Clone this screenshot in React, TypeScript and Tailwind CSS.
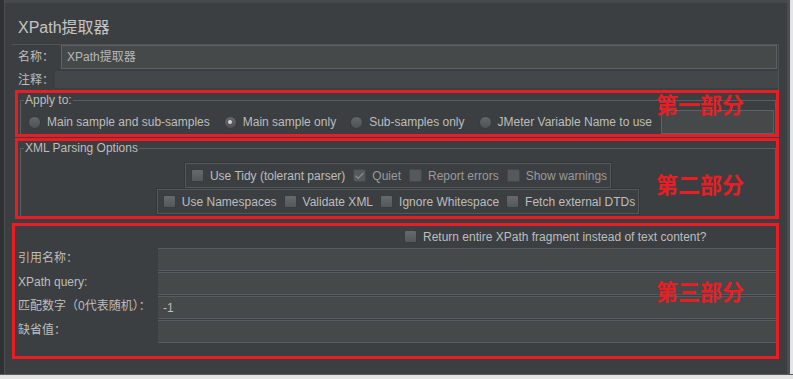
import { Check } from 'lucide-react'

const FONT = "font-['Liberation_Sans','Noto_Sans_CJK_SC',sans-serif]"

function Radio({ checked = false }: { checked?: boolean }) {
  return (
    <span className="flex h-[13px] w-[13px] shrink-0 items-center justify-center rounded-full border border-[#383a3c] bg-linear-to-b from-[#63676a] to-[#4e5254]">
      {checked && <span className="h-[4px] w-[4px] rounded-full bg-[#cfcfcf]" />}
    </span>
  )
}

function Box({ checked = false, dim = false }: { checked?: boolean; dim?: boolean }) {
  return (
    <span
      className={`flex h-[13px] w-[13px] shrink-0 items-center justify-center rounded-[2px] border ${
        dim ? 'border-[#45484a] bg-[#55595b]' : 'border-[#3a3d3f] bg-linear-to-b from-[#666a6d] to-[#54585b]'
      }`}
    >
      {checked && <Check className="h-[12px] w-[12px] text-[#8e9092]" strokeWidth={2.5} />}
    </span>
  )
}

function CheckItem({ label, checked, dim }: { label: string; checked?: boolean; dim?: boolean }) {
  return (
    <span className="flex items-center gap-[6px]">
      <Box checked={checked} dim={dim} />
      <span className={dim ? 'text-[#9a9a9a]' : 'text-[#bdbdbd]'}>{label}</span>
    </span>
  )
}

function RadioItem({ label, checked }: { label: string; checked?: boolean }) {
  return (
    <span className="flex items-center gap-[6px]">
      <Radio checked={checked} />
      <span className="text-[#bdbdbd]">{label}</span>
    </span>
  )
}

function Tag({ text, className }: { text: string; className: string }) {
  return (
    <span
      className={`absolute text-[22px] leading-[24px] font-bold text-[#ea1d25] font-['Noto_Sans_CJK_SC',sans-serif] ${className}`}
    >
      {text}
    </span>
  )
}

const fields = [
  { label: '引用名称：', value: '' },
  { label: 'XPath query:', value: '' },
  { label: '匹配数字（0代表随机）：', value: '-1' },
  { label: '缺省值：', value: '' },
]

export default function App() {
  return (
    <div className={`flex h-[379px] w-[793px] flex-col bg-[#e4e4e4] text-[12px] text-[#bdbdbd] ${FONT}`}>
      <div className="flex h-[375px] border-b border-[#5a5d5f]">
        {/* left edge */}
        <div className="w-[5px] border-r border-[#4d5052] bg-[#2f3133]" />

        <div className="flex flex-1 flex-col border-t-[3px] border-[#46494b] bg-[#3c3f41] pl-[7px] pr-[8px]">
          {/* title */}
          <div className="mt-[15px] ml-[6px] h-[20px] text-[16px] leading-[20px] text-[#c4c4c4]">XPath提取器</div>

          {/* name */}
          <div className="mt-[6px] flex h-[25px] items-center border-t border-r border-[#505355] pl-[6px]">
            <span className="w-[43px]">名称：</span>
            <div className="mr-[1px] flex h-[24px] flex-1 items-center border border-[#5f6264] bg-[#45494a] pl-[5px] text-[#b8b8b8]">
              XPath提取器
            </div>
          </div>

          {/* comment */}
          <div className="flex h-[21px] items-center border-r border-[#505355] pl-[6px]">
            <span className="w-[37px]">注释：</span>
            <div className="h-[17px] flex-1 bg-[#444749]" />
          </div>

          {/* part one */}
          <div className="relative ml-[3px] h-[47px] border-[3px] border-[#ea1d25]">
            <fieldset className="ml-[2px] h-[41px] border-x border-t border-[#5b5e60]">
              <legend className="ml-[3px] px-[1px] text-[12px] leading-[14px]">Apply to:</legend>
              <div className="mt-[3px] flex h-[24px] items-center gap-[14px] pl-[7px]">
                <RadioItem label="Main sample and sub-samples" />
                <RadioItem label="Main sample only" checked />
                <RadioItem label="Sub-samples only" />
                <RadioItem label="JMeter Variable Name to use" />
                <div className="-ml-[5px] mr-[1px] h-[24px] flex-1 border border-[#5f6264] bg-[#45494a]" />
              </div>
            </fieldset>
            <Tag text="第一部分" className="left-[638px] -top-[2px]" />
          </div>

          {/* part two */}
          <div className="relative mt-[1px] ml-[3px] h-[81px] border-[3px] border-[#ea1d25]">
            <fieldset className="ml-[2px] h-[75px] border-x border-t border-[#5b5e60]">
              <legend className="ml-[3px] px-[1px] text-[12px] leading-[14px]">XML Parsing Options</legend>
              <div className="mt-[8px] flex flex-col items-center">
                <div className="flex h-[25px] items-center gap-[8px] border border-[#55585a] pr-[3px] pl-[5px] shadow-[0_0_0_1px_#34373a]">
                  <CheckItem label="Use Tidy (tolerant parser)" />
                  <CheckItem label="Quiet" checked dim />
                  <CheckItem label="Report errors" dim />
                  <CheckItem label="Show warnings" dim />
                </div>
                <div className="mt-[1px] flex h-[25px] items-center gap-[7px] border border-[#55585a] pr-[3px] pl-[5px] shadow-[0_0_0_1px_#34373a]">
                  <CheckItem label="Use Namespaces" />
                  <CheckItem label="Validate XML" />
                  <CheckItem label="Ignore Whitespace" />
                  <CheckItem label="Fetch external DTDs" />
                </div>
              </div>
            </fieldset>
            <Tag text="第二部分" className="left-[638px] top-[30px]" />
          </div>

          {/* part three */}
          <div className="relative mt-[4px] h-[136px] border-[3px] border-[#ea1d25]">
            <div className="flex h-[21px] items-center pl-[389px]">
              <CheckItem label="Return entire XPath fragment instead of text content?" />
            </div>
            <div className="mt-[1px] flex flex-col gap-[1px]">
              {fields.map((f) => (
                <div key={f.label} className="flex h-[23px] items-center">
                  <span className="-mt-[4px] w-[143px] pl-[3px]">{f.label}</span>
                  <div className="flex h-[23px] flex-1 items-center border-y border-[#585b5d] bg-[#45494a] pl-[5px] text-[#bdbdbd]">
                    {f.value}
                  </div>
                </div>
              ))}
            </div>
            <Tag text="第三部分" className="left-[641px] top-[52px]" />
          </div>
        </div>

        {/* right edge */}
        <div className="w-[3px] bg-[#4b4e50]" />
        <div className="w-[3px] bg-[#e4e4e4]" />
      </div>
    </div>
  )
}
